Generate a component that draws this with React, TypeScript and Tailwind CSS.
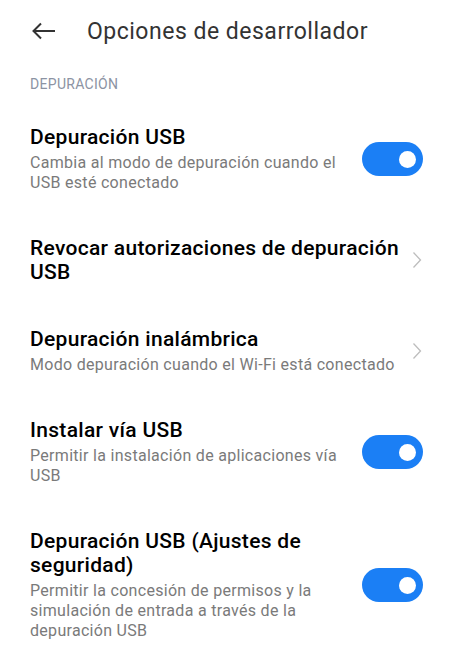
import { useState } from "react";

type Item = {
	title: string;
	subtitle?: string;
	kind: "toggle" | "link";
};

const items: Item[] = [
	{
		title: "Depuración USB",
		subtitle: "Cambia al modo de depuración cuando el USB esté conectado",
		kind: "toggle",
	},
	{ title: "Revocar autorizaciones de depuración USB", kind: "link" },
	{
		title: "Depuración inalámbrica",
		subtitle: "Modo depuración cuando el Wi-Fi está conectado",
		kind: "link",
	},
	{
		title: "Instalar vía USB",
		subtitle: "Permitir la instalación de aplicaciones vía USB",
		kind: "toggle",
	},
	{
		title: "Depuración USB (Ajustes de seguridad)",
		subtitle:
			"Permitir la concesión de permisos y la simulación de entrada a través de la depuración USB",
		kind: "toggle",
	},
];

const Toggle = () => {
	const [on, setOn] = useState(true);
	return (
		<button
			type="button"
			onClick={() => setOn(!on)}
			className={`flex h-[34px] w-[61px] shrink-0 items-center rounded-full px-[7px] ${
				on ? "justify-end bg-[#1b7ff5]" : "justify-start bg-[#d9d9d9]"
			}`}
		>
			<span className="h-[17px] w-[17px] rounded-full bg-white" />
		</button>
	);
};

const Chevron = () => (
	<svg width="10" height="18" viewBox="0 0 10 18" className="shrink-0" fill="none">
		<path d="M1.5 1.5 L8.5 9 L1.5 16.5" stroke="#bdbdbd" strokeWidth="1.3" />
	</svg>
);

export default function App() {
	return (
		<div className="min-h-[650px] w-[451px] bg-white font-['Roboto',sans-serif]">
			{/* Header */}
			<div className="flex h-[62px] items-center pl-[32px]">
				<svg width="24" height="18" viewBox="0 0 24 18" fill="none">
					<path
						d="M23 9 H2 M9 1.5 L1.5 9 L9 16.5"
						stroke="#333"
						strokeWidth="2"
						strokeLinejoin="miter"
					/>
				</svg>
				<h1 className="ml-[31px] text-[23px] leading-none tracking-[0.5px] text-[#333]">
					Opciones de desarrollador
				</h1>
			</div>

			{/* Section label */}
			<div className="mb-[11.5px] pl-[30px] pt-[14px] text-[14px] leading-[16px] tracking-[0.3px] text-[#8c93a3]">
				DEPURACIÓN
			</div>

			{items.map((item) => (
				<div
					key={item.title}
					className={`flex items-center pl-[30px] py-[21.5px] ${
						item.kind === "toggle" ? "gap-[16px] pr-[28px]" : "gap-[6px] pr-[29px]"
					}`}
				>
					<div className="min-w-0 flex-1">
						<div className="text-[21px] font-medium leading-[24px] tracking-[0.3px] text-black">
							{item.title}
						</div>
						{item.subtitle && (
							<div className="mt-[4px] text-[16px] leading-[20px] tracking-[0.3px] text-[#7a7a7a]">
								{item.subtitle}
							</div>
						)}
					</div>
					{item.kind === "toggle" ? <Toggle /> : <Chevron />}
				</div>
			))}
		</div>
	);
}
